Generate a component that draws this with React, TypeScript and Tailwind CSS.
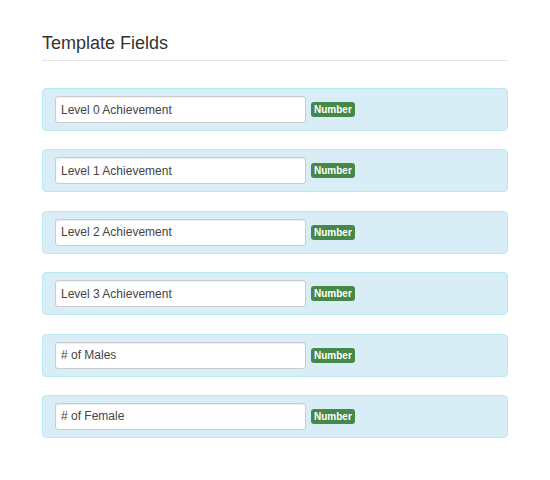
import React from 'react';

const fields = [
  'Level 0 Achievement',
  'Level 1 Achievement',
  'Level 2 Achievement',
  'Level 3 Achievement',
  '# of Males',
  '# of Female',
];

const App: React.FC = () => {
  return (
    <div className="w-[550px] h-[480px] bg-white px-[42px] pt-[33px] font-['Liberation_Sans',Arial,sans-serif] text-[#333]">
      <h2 className="text-[18px] leading-[20px] pb-[7px] border-b border-[#e5e5e5]">Template Fields</h2>
      <div className="mt-[27px] flex flex-col gap-[18.4px]">
        {fields.map((f) => (
          <div
            key={f}
            className="h-[43px] flex items-center pl-[12px] bg-[#d9edf7] border border-[#bce8f1] rounded-[4px]"
          >
            <input
              type="text"
              defaultValue={f}
              className="w-[251px] h-[27px] px-[5px] text-[12px] text-[#444] bg-white border border-[#ccc] rounded-[3px] shadow-[inset_0_1px_1px_rgba(0,0,0,0.075)] outline-none"
            />
            <span className="ml-[5px] bg-[#468847] text-white text-[10px] font-bold leading-[15px] px-[3px] rounded-[3px]">
              Number
            </span>
          </div>
        ))}
      </div>
    </div>
  );
};

export default App;
